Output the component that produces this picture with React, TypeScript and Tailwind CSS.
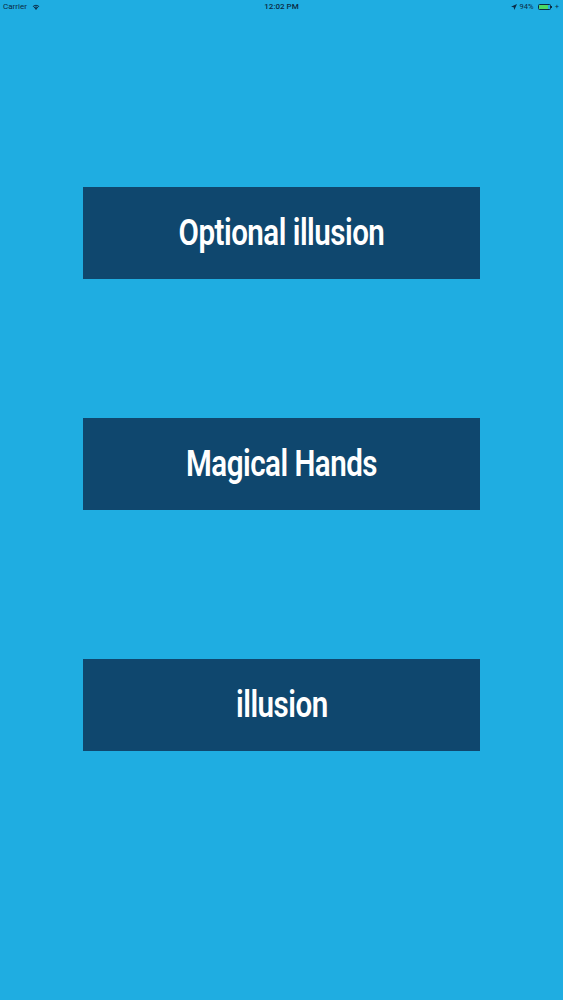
import React from "react";

function Wifi() {
  return (
    <svg width="8" height="6" viewBox="0 0 16 12" className="ml-[5px]">
      <path d="M8 12 L5.5 9 A3.5 3.5 0 0 1 10.5 9 Z" fill="#0b2a44" />
      <path d="M3.6 7.2 A6.5 6.5 0 0 1 12.4 7.2 L11.2 8.5 A4.8 4.8 0 0 0 4.8 8.5 Z" fill="#0b2a44" />
      <path d="M1.3 4.7 A10 10 0 0 1 14.7 4.7 L13.4 6 A8.2 8.2 0 0 0 2.6 6 Z" fill="#0b2a44" />
    </svg>
  );
}

function Btn({ label }: { label: string }) {
  return (
    <div className="w-[397px] h-[92px] bg-[#0f476e] flex items-center justify-center">
      <span
        className="text-white text-[36px] font-semibold tracking-[-0.6px] leading-none scale-x-[0.82] whitespace-nowrap"
        style={{ fontFamily: "Roboto, 'Liberation Sans', sans-serif" }}
      >
        {label}
      </span>
    </div>
  );
}

export default function App() {
  return (
    <div className="w-[563px] h-[1000px] bg-[#1fade1] flex flex-col" style={{ fontFamily: "Roboto, 'Liberation Sans', sans-serif" }}>
      <div className="h-[14px] relative flex items-center px-[3px] text-[8px] text-[#0b2a44] leading-none">
        <div className="flex items-center">
          <span>Carrier</span>
          <Wifi />
        </div>
        <div className="absolute left-0 right-0 top-0 h-[14px] flex items-center justify-center font-medium">12:02 PM</div>
        <div className="ml-auto flex items-center gap-[2px] pr-[1px]">
          <svg width="6" height="6" viewBox="0 0 10 10">
            <path d="M10 0 L0 4.5 L4.5 5.5 L5.5 10 Z" fill="#0b2a44" />
          </svg>
          <span className="text-[7.5px] ml-[1px]">94%</span>
          <div className="ml-[2px] w-[13px] h-[6.5px] border border-[#0b2a44] rounded-[1.5px] p-[0.5px] flex">
            <div className="w-[94%] h-full bg-[#4cd964] rounded-[0.5px]" />
          </div>
          <div className="w-[1px] h-[2px] bg-[#0b2a44] -ml-[1.5px]" />
          <span className="text-[7px] ml-[1px]">+</span>
        </div>
      </div>
      <div className="flex flex-col items-center pt-[173px]">
        <Btn label="Optional illusion" />
        <div className="h-[139px]" />
        <Btn label="Magical Hands" />
        <div className="h-[149px]" />
        <Btn label="illusion" />
      </div>
    </div>
  );
}
